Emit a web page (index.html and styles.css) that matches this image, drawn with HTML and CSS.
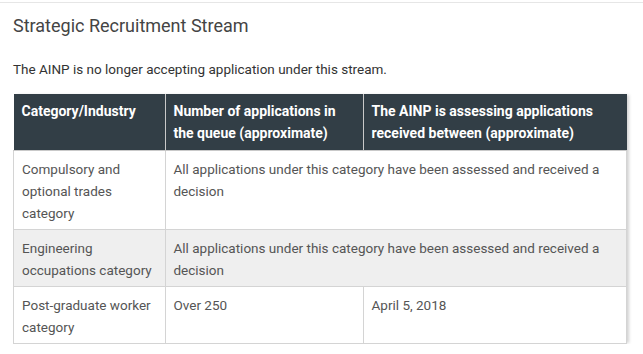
FILE: index.html
```html
<!doctype html>
<html>
<head>
<meta charset="UTF-8">
<title>Strategic Recruitment Stream</title>
<link rel="stylesheet" href="styles.css">
</head>
<body>
<div class="page">
  <h2 class="title">Strategic Recruitment Stream</h2>
  <p class="intro">The AINP is no longer accepting application under this stream.</p>
  <div class="table-wrap">
    <table class="queue">
      <thead>
        <tr>
          <th class="col-cat">Category/Industry</th>
          <th class="col-num">Number of applications in the queue (approximate)</th>
          <th class="col-date">The AINP is assessing applications received between (approximate)</th>
        </tr>
      </thead>
      <tbody>
        <tr>
          <td>Compulsory and optional trades category</td>
          <td colspan="2">All applications under this category have been assessed and received a decision</td>
        </tr>
        <tr class="alt">
          <td>Engineering occupations category</td>
          <td colspan="2">All applications under this category have been assessed and received a decision</td>
        </tr>
        <tr>
          <td>Post-graduate worker category</td>
          <td>Over 250</td>
          <td>April 5, 2018</td>
        </tr>
      </tbody>
    </table>
  </div>
</div>
</body>
</html>
```

FILE: styles.css
```css
html, body {
	margin: 0;
	background: #fff;
}

body {
	font-family: Roboto, "Liberation Sans", sans-serif;
	color: #444;
	border-top: 1px solid #e6e6e6;
	margin-top: 2px;
}

.page {
	padding: 0 13px;
}

.title {
	margin: 0;
	padding-top: 11px;
	font-size: 18px;
	font-weight: 400;
	line-height: 24px;
	color: #444;
}

.intro {
	margin: 0;
	padding-top: 20px;
	font-size: 13.5px;
	line-height: 22px;
	color: #333;
}

.table-wrap {
	margin-top: 14px;
	width: 614px;
	box-shadow: 3px 0 3px -1px rgba(0, 0, 0, 0.18);
}

/* the table */
.queue {
	width: 614px;
	border-collapse: collapse;
	font-size: 13.5px;
	line-height: 22px;
}

.queue th {
	background: #323e46;
	color: #fff;
	font-size: 14px;
	font-weight: 700;
	text-align: left;
	vertical-align: top;
	padding: 6px 8px 6px;
	border-right: 1px solid #c9c9c9;
	border-bottom: 1px solid #c9c9c9;
}

.queue th:last-child {
	border-right: none;
}

.col-cat { width: 135px; }
.col-num { width: 181px; }

.queue td {
	vertical-align: top;
	padding: 7px 8px 5px;
	color: #555;
	border: 1px solid #d4d4d4;
}

.queue tr.alt td {
	background: #efefef;
}
```
